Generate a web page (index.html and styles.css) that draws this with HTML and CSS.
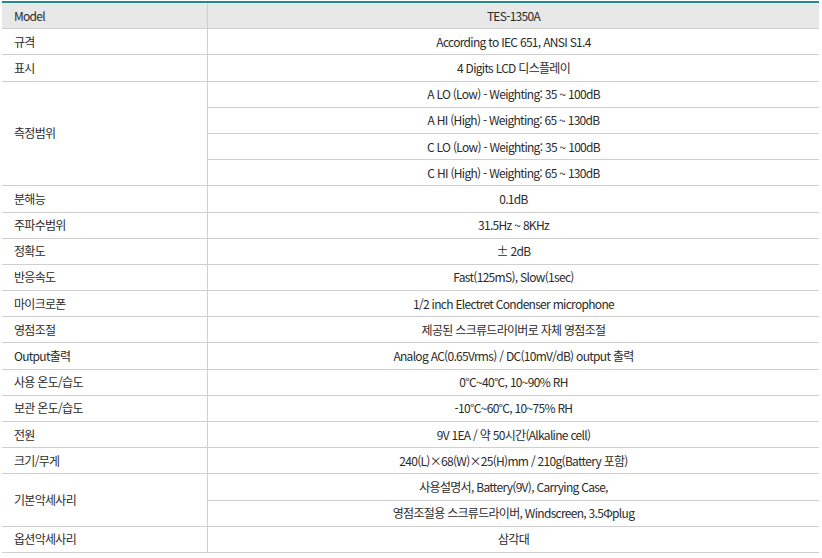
FILE: index.html
```html
<!DOCTYPE html>
<html lang="ko">
<head>
<meta charset="utf-8">
<link rel="stylesheet" href="styles.css">
</head>
<body>
<table class="spec">
  <thead>
    <tr><th class="label">Model</th><th class="val">TES-1350A</th></tr>
  </thead>
  <tbody>
    <tr><td class="label">규격</td><td class="val">According to IEC 651, ANSI S1.4</td></tr>
    <tr><td class="label">표시</td><td class="val">4 Digits LCD 디스플레이</td></tr>
    <tr><td class="label" rowspan="4">측정범위</td><td class="val">A LO (Low) - Weighting: 35 ~ 100dB</td></tr>
    <tr><td class="val">A HI (High) - Weighting: 65 ~ 130dB</td></tr>
    <tr><td class="val">C LO (Low) - Weighting: 35 ~ 100dB</td></tr>
    <tr><td class="val">C HI (High) - Weighting: 65 ~ 130dB</td></tr>
    <tr><td class="label">분해능</td><td class="val">0.1dB</td></tr>
    <tr><td class="label">주파수범위</td><td class="val">31.5Hz ~ 8KHz</td></tr>
    <tr><td class="label">정확도</td><td class="val">± 2dB</td></tr>
    <tr><td class="label">반응속도</td><td class="val">Fast(125mS), Slow(1sec)</td></tr>
    <tr><td class="label">마이크로폰</td><td class="val">1/2 inch Electret Condenser microphone</td></tr>
    <tr><td class="label">영점조절</td><td class="val">제공된 스크류드라이버로 자체 영점조절</td></tr>
    <tr><td class="label">Output출력</td><td class="val">Analog AC(0.65Vrms) / DC(10mV/dB) output 출력</td></tr>
    <tr><td class="label">사용 온도/습도</td><td class="val">0°C~40°C, 10~90% RH</td></tr>
    <tr><td class="label">보관 온도/습도</td><td class="val">-10°C~60°C, 10~75% RH</td></tr>
    <tr><td class="label">전원</td><td class="val">9V 1EA / 약 50시간(Alkaline cell)</td></tr>
    <tr><td class="label">크기/무게</td><td class="val">240(L)×68(W)×25(H)mm / 210g(Battery 포함)</td></tr>
    <tr><td class="label" rowspan="2">기본악세사리</td><td class="val">사용설명서, Battery(9V), Carrying Case,</td></tr>
    <tr><td class="val">영점조절용 스크류드라이버, Windscreen, 3.5Φplug</td></tr>
    <tr><td class="label">옵션악세사리</td><td class="val">삼각대</td></tr>
  </tbody>
</table>
</body>
</html>
```

FILE: styles.css
```css
html, body {
  margin: 0;
  padding: 0;
  background: #fff;
}
body {
  padding: 1px 3px 0 2px;
  font-family: "Noto Sans CJK KR", "Noto Sans", sans-serif;
  color: #2b2b2b;
}
.spec {
  width: 817px;
  border-collapse: collapse;
  border-top: 2px solid #23898a;
  font-size: 12px;
  letter-spacing: -0.7px;
}
.spec th, .spec td {
  height: 25.2px;
  padding: 0;
  border-bottom: 1px solid #cfcfcf;
  font-weight: normal;
  line-height: 16px;
}
.spec thead th {
  background: #e8e8e8;
}
.spec .label {
  width: 193px;
  padding-left: 12px;
  text-align: left;
  border-right: 1px solid #cfcfcf;
}
.spec .val {
  text-align: center;
}
```
